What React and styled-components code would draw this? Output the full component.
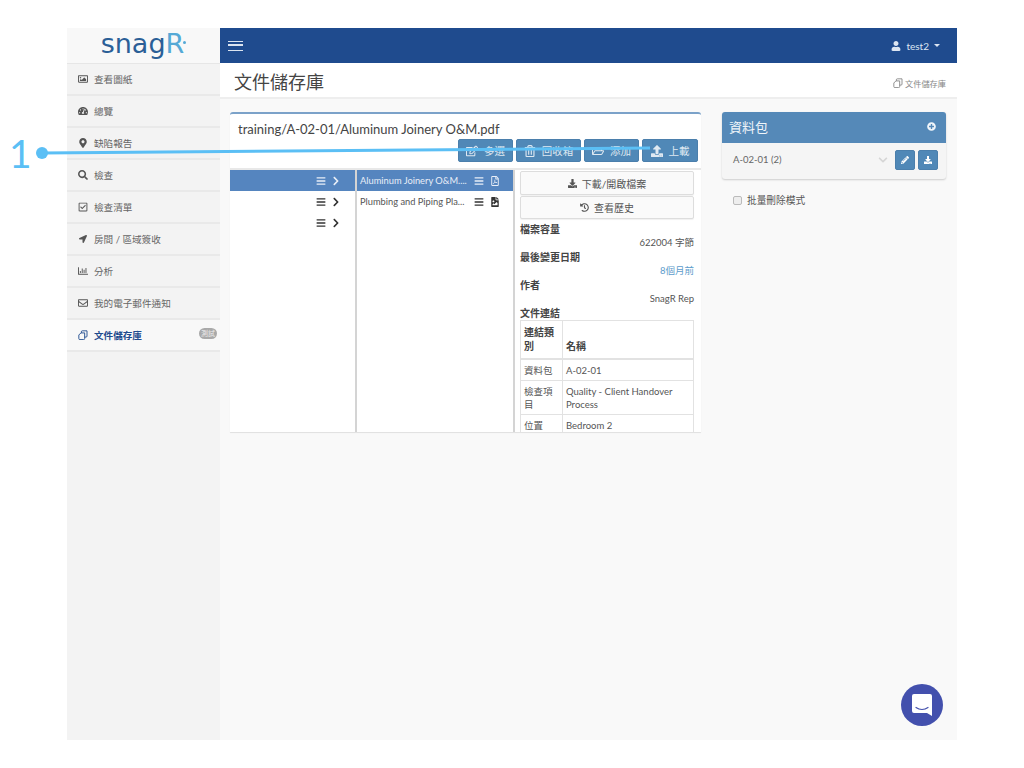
import React from 'react';
import styled, { createGlobalStyle } from 'styled-components';
import {
  FaRegImage, FaTachometerAlt, FaMapMarkerAlt, FaSearch, FaRegCheckSquare, FaLocationArrow,
  FaRegChartBar, FaRegEnvelope, FaUser, FaBars, FaChevronRight, FaRegFilePdf,
  FaFileImage, FaDownload, FaHistory, FaPencilAlt, FaPlusCircle, FaUpload, FaChevronDown,
  FaRegEdit, FaRegTrashAlt, FaRegFolderOpen,
} from 'react-icons/fa';

const FONT = `"Lato", "Noto Sans CJK TC", sans-serif`;

const Global = createGlobalStyle`
  html, body { margin: 0; padding: 0; background: #fff; }
  body { font-family: ${FONT}; color: #555; font-size: 10px; }
  * { box-sizing: border-box; }
`;

const Shell = styled.div`
  position: relative;
  width: 890px;
  height: 712px;
  margin: 28px 0 0 67px;
  display: flex;
`;
const Sidebar = styled.aside`
  width: 153px;
  background: #f3f3f3;
  display: flex;
  flex-direction: column;
`;
const LogoBar = styled.div`
  height: 36px;
  background: #f8f8f8;
  border-bottom: 1px solid #e6e6e6;
  display: flex;
  align-items: center;
  justify-content: center;
  padding-right: 2px;
`;
const Logo = styled.div`
  font-family: "DejaVu Sans", sans-serif;
  font-size: 27px;
  line-height: 30px;
  color: #2b5f97;
  margin-top: -4px;
  position: relative;
  span { color: #55a9d6; }
  &::after {
    content: '';
    position: absolute;
    right: -2px;
    top: 12px;
    width: 3px;
    height: 3px;
    border-radius: 50%;
    background: #55a9d6;
  }
`;
const Item = styled.div`
  height: 32px;
  display: flex;
  align-items: center;
  padding: 0 0 1px 11px;
  gap: 6px;
  border-bottom: 2px solid #e9e9e9;
  background: ${p => (p.$active ? '#f8f8f8' : 'transparent')};
  color: ${p => (p.$active ? '#1f4b8e' : '#666')};
  font-weight: ${p => (p.$active ? 700 : 400)};
  font-size: 9.6px;
  position: relative;
  svg { width: 10px; height: 10px; flex: none; color: ${p => (p.$active ? '#1f4b8e' : '#555')}; }
`;
const NavArrow = styled(FaLocationArrow)`
  && { width: 8px; height: 8px; margin: 0 1px; }
`;
const Badge = styled.span`
  position: absolute;
  right: 3px;
  top: 8px;
  height: 11px;
  width: 18px;
  border-radius: 5.5px;
  background: #a9a9a9;
  color: #eee;
  font-size: 7px;
  font-weight: 400;
  line-height: 11px;
  text-align: center;
`;
const Main = styled.main`
  flex: 1;
  display: flex;
  flex-direction: column;
  background: #f9f9f9;
`;
const Topbar = styled.header`
  height: 35px;
  background: #1f4b8e;
  display: flex;
  align-items: center;
  justify-content: space-between;
  padding: 0 17px 0 8px;
  color: #dde6f2;
`;
const Burger = styled.div`
  width: 15px;
  height: 10px;
  border-top: 1.5px solid #dbe4f0;
  border-bottom: 1.5px solid #dbe4f0;
  position: relative;
  &::after {
    content: '';
    position: absolute;
    left: 0;
    right: 0;
    top: 2.75px;
    height: 1.5px;
    background: #dbe4f0;
  }
`;
const UserMenu = styled.div`
  display: flex;
  align-items: center;
  gap: 5px;
  font-size: 10px;
  svg { width: 10px; height: 10px; }
`;
const Caret = styled.i`
  width: 0;
  height: 0;
  border-left: 3px solid transparent;
  border-right: 3px solid transparent;
  border-top: 3px solid #dde6f2;
`;
const PageHead = styled.div`
  height: 36px;
  background: #fff;
  border-bottom: 2px solid #eeeeee;
  display: flex;
  align-items: center;
  justify-content: space-between;
  padding: 0 11px 0 14px;
`;
const PageTitle = styled.h1`
  margin: 2px 0 0;
  font-size: 18px;
  font-weight: 400;
  color: #444;
`;
const Crumb = styled.div`
  display: flex;
  align-items: center;
  gap: 2px;
  font-size: 8.2px;
  color: #888;
  margin-top: 6px;
`;
const Content = styled.div`
  display: flex;
  padding: 13px 11px 0 10px;
  gap: 21px;
  align-items: flex-start;
`;
const Card = styled.section`
  width: 471px;
  height: 320px;
  background: #fff;
  border-top: 2px solid #7ba2c9;
  border-radius: 3px 3px 0 0;
  box-shadow: 0 1px 1px rgba(0,0,0,.1);
  display: flex;
  flex-direction: column;
  overflow: hidden;
`;
const CardHead = styled.div`
  height: 56px;
  border-bottom: 2px solid #e8e8e8;
  padding: 5px 3px 0 8px;
  display: flex;
  flex-direction: column;
`;
const Path = styled.div`
  font-size: 13px;
  line-height: 20px;
  color: #444;
`;
const Toolbar = styled.div`
  display: flex;
  justify-content: flex-end;
  gap: 3px;
`;
const ToolBtn = styled.button`
  height: 23px;
  width: ${p => p.$w}px;
  border: 1px solid #4b7fac;
  border-radius: 2px;
  background: #5088b7;
  color: #dfe9f2;
  font-family: ${FONT};
  font-size: 10.5px;
  padding: 0;
  display: flex;
  align-items: center;
  justify-content: center;
  gap: 6px;
  svg { width: 12px; height: 12px; }
`;
const Columns = styled.div`
  flex: 1;
  min-height: 0;
  display: grid;
  grid-template-columns: 127px 158px 186px;
`;
const Col = styled.div`
  border-right: ${p => (p.$last ? 'none' : '2px solid #d4d4d4')};
  min-width: 0;
  overflow: hidden;
`;
const Row = styled.div`
  height: 21px;
  display: flex;
  align-items: center;
  justify-content: flex-end;
  padding: 0 ${p => p.$pr || 14}px 0 3px;
  gap: ${p => p.$gap || 5}px;
  background: ${p => (p.$on ? '#5585bf' : 'transparent')};
  color: ${p => (p.$on ? '#e8eef7' : '#333')};
  font-size: 9.3px;
  svg { width: 10px; height: 10px; flex: none; }
`;
const RowName = styled.span`
  flex: 1;
  min-width: 0;
  white-space: nowrap;
  color: ${p => (p.$on ? '#e8eef7' : '#555')};
`;
const Details = styled.div`
  padding: 1px 7px 0 5px;
`;
const WideBtn = styled.button`
  width: 100%;
  height: ${p => p.$h}px;
  margin-bottom: 1px;
  border: 1px solid #ddd;
  border-radius: 2px;
  background: #fafafa;
  color: #555;
  font-family: ${FONT};
  font-size: 10px;
  display: flex;
  align-items: center;
  justify-content: center;
  gap: 5px;
  padding: 0;
  box-shadow: 0 1px 1px rgba(0,0,0,.06);
  svg { width: 9px; height: 9px; }
`;
const Label = styled.div`
  font-size: 10px;
  line-height: 14px;
  font-weight: 700;
  color: #444;
  margin-top: ${p => p.$mt || 0}px;
`;
const Value = styled.div`
  text-align: right;
  font-size: 9.5px;
  line-height: 14px;
  color: ${p => (p.$link ? '#5c9bcb' : '#555')};
`;
const Table = styled.table`
  width: 100%;
  border-collapse: collapse;
  font-size: 9.5px;
  color: #555;
  table-layout: fixed;
  th, td { border: 1px solid #e2e2e2; padding: 3px; text-align: left; vertical-align: middle; }
  td { line-height: 13px; height: 21px; padding-top: 4px; padding-bottom: 3px; }
  th { font-size: 10px; line-height: 14px; font-weight: 700; color: #444; vertical-align: bottom; border-bottom-width: 2px; padding: 4px 3px 5px; }
`;
const Col1 = styled.col`
  width: 42px;
`;
const Side = styled.aside`
  width: 224px;
  display: flex;
  flex-direction: column;
`;
const Panel = styled.section`
  height: 67px;
  background: #f5f5f5;
  border-radius: 3px;
  box-shadow: 0 1px 2px rgba(0,0,0,.18);
  overflow: hidden;
`;
const PanelHead = styled.div`
  height: 31px;
  background: #5589b8;
  color: #f0f5fa;
  font-size: 13px;
  display: flex;
  align-items: center;
  justify-content: space-between;
  padding: 0 10px 2px 7px;
  svg { width: 9px; height: 9px; }
`;
const PanelRow = styled.div`
  height: 36px;
  display: flex;
  align-items: center;
  padding: 0 8px 3px 11px;
  font-size: 9.5px;
  color: #666;
  gap: 3px;
`;
const PanelName = styled.span`
  flex: 1;
`;
const Chevron = styled.span`
  color: #d6d6d6;
  display: flex;
  margin-right: 4px;
  svg { width: 10px; height: 10px; }
`;
const SmallBtn = styled.button`
  width: 20px;
  height: 20px;
  border: 1px solid #4b7fac;
  border-radius: 2px;
  background: #5088b7;
  color: #fff;
  padding: 0;
  display: flex;
  align-items: center;
  justify-content: center;
  svg { width: 8px; height: 8px; }
`;
const Check = styled.label`
  display: flex;
  align-items: center;
  gap: 5px;
  margin: 14px 0 0 11px;
  font-size: 9.7px;
  color: #555;
`;
const Box = styled.i`
  width: 9px;
  height: 9px;
  border: 1px solid #bbb;
  border-radius: 2px;
  background: #eee;
`;
const Chat = styled.div`
  position: absolute;
  left: 834px;
  top: 656px;
  width: 42px;
  height: 42px;
  border-radius: 50%;
  background: #4350ad;
  display: flex;
  align-items: center;
  justify-content: center;
`;
const Annotation = styled.svg`
  position: absolute;
  left: 0;
  top: 0;
  pointer-events: none;
`;
const AnnotationNum = styled.div`
  position: absolute;
  left: 9px;
  top: 130px;
  font-family: "Lato", sans-serif;
  font-size: 39px;
  line-height: 46px;
  color: #5bbff5;
`;

const DocsIcon = () => (
  <svg viewBox="0 0 12 12" width="10" height="10" fill="none" stroke="currentColor" strokeWidth="1.1">
    <path d="M4 3.5V2.2A1.2 1.2 0 0 1 5.2 1h5.6v6.3A1.2 1.2 0 0 1 9.6 8.5H8" />
    <path d="M1 6l2.5-2.5H8v6.8A1.2 1.2 0 0 1 6.8 11.5H2.2A1.2 1.2 0 0 1 1 10.3z" />
  </svg>
);

const menu = [
  [FaRegImage, '查看圖紙'],
  [FaTachometerAlt, '總覽'],
  [FaMapMarkerAlt, '缺陷報告'],
  [FaSearch, '檢查'],
  [FaRegCheckSquare, '檢查清單'],
  [NavArrow, '房間 / 區域簽收'],
  [FaRegChartBar, '分析'],
  [FaRegEnvelope, '我的電子郵件通知'],
];

export default function App() {
  return (
    <>
      <Global />
      <Shell>
        <Sidebar>
          <LogoBar><Logo>snag<span>R</span></Logo></LogoBar>
          {menu.map(([I, t]) => <Item key={t}><I />{t}</Item>)}
          <Item $active><DocsIcon />文件儲存庫<Badge>測試</Badge></Item>
        </Sidebar>
        <Main>
          <Topbar>
            <Burger />
            <UserMenu><FaUser />test2<Caret /></UserMenu>
          </Topbar>
          <PageHead>
            <PageTitle>文件儲存庫</PageTitle>
            <Crumb><DocsIcon />文件儲存庫</Crumb>
          </PageHead>
          <Content>
            <Card>
              <CardHead>
                <Path>training/A-02-01/Aluminum Joinery O&amp;M.pdf</Path>
                <Toolbar>
                  <ToolBtn $w={55}><FaRegEdit />多選</ToolBtn>
                  <ToolBtn $w={65}><FaRegTrashAlt />回收箱</ToolBtn>
                  <ToolBtn $w={55}><FaRegFolderOpen />添加</ToolBtn>
                  <ToolBtn $w={56}><FaUpload />上載</ToolBtn>
                </Toolbar>
              </CardHead>
              <Columns>
                <Col>
                  <Row $on><FaBars /><FaChevronRight /></Row>
                  <Row><FaBars /><FaChevronRight /></Row>
                  <Row><FaBars /><FaChevronRight /></Row>
                </Col>
                <Col>
                  <Row $on $pr={13} $gap={6}><RowName $on>Aluminum Joinery O&amp;M....</RowName><FaBars /><FaRegFilePdf /></Row>
                  <Row $pr={13} $gap={6}><RowName>Plumbing and Piping Pla...</RowName><FaBars /><FaFileImage /></Row>
                </Col>
                <Col $last>
                  <Details>
                    <WideBtn $h={24}><FaDownload />下載/開啟檔案</WideBtn>
                    <WideBtn $h={23}><FaHistory />查看歷史</WideBtn>
                    <Label $mt={3}>檔案容量</Label>
                    <Value>622004 字節</Value>
                    <Label>最後變更日期</Label>
                    <Value $link>8個月前</Value>
                    <Label>作者</Label>
                    <Value>SnagR Rep</Value>
                    <Label>文件連結</Label>
                    <Table>
                      <colgroup><Col1 /><col /></colgroup>
                      <thead><tr><th>連結類別</th><th>名稱</th></tr></thead>
                      <tbody>
                        <tr><td>資料包</td><td>A-02-01</td></tr>
                        <tr><td>檢查項目</td><td>Quality - Client Handover Process</td></tr>
                        <tr><td>位置</td><td>Bedroom 2</td></tr>
                      </tbody>
                    </Table>
                  </Details>
                </Col>
              </Columns>
            </Card>
            <Side>
              <Panel>
                <PanelHead>資料包<FaPlusCircle /></PanelHead>
                <PanelRow>
                  <PanelName>A-02-01 (2)</PanelName>
                  <Chevron><FaChevronDown /></Chevron>
                  <SmallBtn><FaPencilAlt /></SmallBtn>
                  <SmallBtn><FaDownload /></SmallBtn>
                </PanelRow>
              </Panel>
              <Check><Box />批量刪除模式</Check>
            </Side>
          </Content>
        </Main>
        <Chat>
          <svg width="22" height="24" viewBox="0 0 22 24">
            <path d="M3 1h16a2 2 0 0 1 2 2v20l-5-3H3a2 2 0 0 1-2-2V3a2 2 0 0 1 2-2z" fill="#fff" />
            <path d="M5 14.5c3.5 2.4 8.5 2.4 12 0" fill="none" stroke="#4350ad" strokeWidth="1.2" strokeLinecap="round" />
          </svg>
        </Chat>
      </Shell>
      <AnnotationNum>1</AnnotationNum>
      <Annotation width="1024" height="768">
        <line x1="42" y1="153" x2="650" y2="148" stroke="#5bbff5" strokeWidth="3" />
        <circle cx="42" cy="153" r="6" fill="#5bbff5" />
      </Annotation>
    </>
  );
}
